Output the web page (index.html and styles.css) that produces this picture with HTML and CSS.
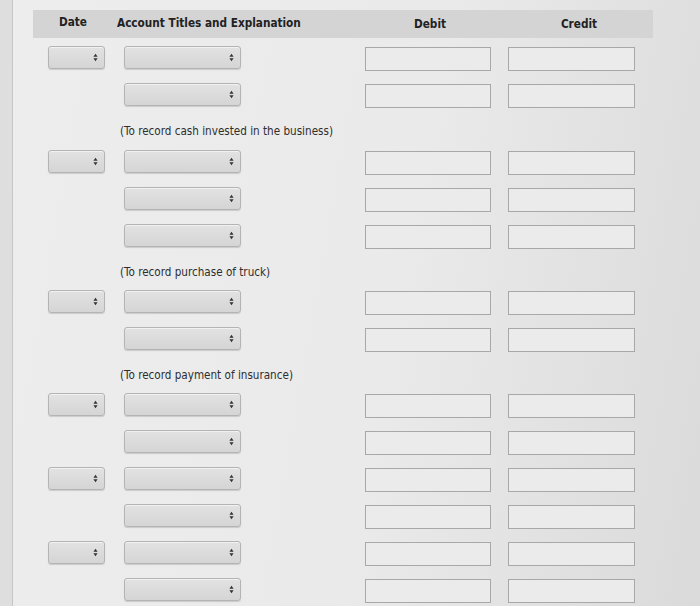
FILE: index.html
```html
<!DOCTYPE html>
<html>
<head>
<meta charset="utf-8">
<link rel="stylesheet" href="styles.css">
</head>
<body>
<div class="sheet">
  <div class="journal">
    <div class="head">
      <div class="h-date">Date</div>
      <div class="h-acct">Account Titles and Explanation</div>
      <div class="h-amt">Debit</div>
      <div class="h-amt">Credit</div>
    </div>

    <div class="row">
      <div class="c-date"><div class="sel sel-date"><svg class="arr" viewBox="0 0 6 10"><polygon points="3,0.5 5.5,4 0.5,4"/><polygon points="0.5,6 5.5,6 3,9.5"/></svg></div></div>
      <div class="c-acct"><div class="sel sel-acct"><svg class="arr" viewBox="0 0 6 10"><polygon points="3,0.5 5.5,4 0.5,4"/><polygon points="0.5,6 5.5,6 3,9.5"/></svg></div></div>
      <div class="c-deb"><input class="amt" type="text"></div>
      <div class="c-cred"><input class="amt" type="text"></div>
    </div>
    <div class="row">
      <div class="c-date"></div>
      <div class="c-acct"><div class="sel sel-acct"><svg class="arr" viewBox="0 0 6 10"><polygon points="3,0.5 5.5,4 0.5,4"/><polygon points="0.5,6 5.5,6 3,9.5"/></svg></div></div>
      <div class="c-deb"><input class="amt" type="text"></div>
      <div class="c-cred"><input class="amt" type="text"></div>
    </div>
    <div class="note note-first">(To record cash invested in the business)</div>

    <div class="row">
      <div class="c-date"><div class="sel sel-date"><svg class="arr" viewBox="0 0 6 10"><polygon points="3,0.5 5.5,4 0.5,4"/><polygon points="0.5,6 5.5,6 3,9.5"/></svg></div></div>
      <div class="c-acct"><div class="sel sel-acct"><svg class="arr" viewBox="0 0 6 10"><polygon points="3,0.5 5.5,4 0.5,4"/><polygon points="0.5,6 5.5,6 3,9.5"/></svg></div></div>
      <div class="c-deb"><input class="amt" type="text"></div>
      <div class="c-cred"><input class="amt" type="text"></div>
    </div>
    <div class="row">
      <div class="c-date"></div>
      <div class="c-acct"><div class="sel sel-acct"><svg class="arr" viewBox="0 0 6 10"><polygon points="3,0.5 5.5,4 0.5,4"/><polygon points="0.5,6 5.5,6 3,9.5"/></svg></div></div>
      <div class="c-deb"><input class="amt" type="text"></div>
      <div class="c-cred"><input class="amt" type="text"></div>
    </div>
    <div class="row">
      <div class="c-date"></div>
      <div class="c-acct"><div class="sel sel-acct"><svg class="arr" viewBox="0 0 6 10"><polygon points="3,0.5 5.5,4 0.5,4"/><polygon points="0.5,6 5.5,6 3,9.5"/></svg></div></div>
      <div class="c-deb"><input class="amt" type="text"></div>
      <div class="c-cred"><input class="amt" type="text"></div>
    </div>
    <div class="note">(To record purchase of truck)</div>

    <div class="row">
      <div class="c-date"><div class="sel sel-date"><svg class="arr" viewBox="0 0 6 10"><polygon points="3,0.5 5.5,4 0.5,4"/><polygon points="0.5,6 5.5,6 3,9.5"/></svg></div></div>
      <div class="c-acct"><div class="sel sel-acct"><svg class="arr" viewBox="0 0 6 10"><polygon points="3,0.5 5.5,4 0.5,4"/><polygon points="0.5,6 5.5,6 3,9.5"/></svg></div></div>
      <div class="c-deb"><input class="amt" type="text"></div>
      <div class="c-cred"><input class="amt" type="text"></div>
    </div>
    <div class="row">
      <div class="c-date"></div>
      <div class="c-acct"><div class="sel sel-acct"><svg class="arr" viewBox="0 0 6 10"><polygon points="3,0.5 5.5,4 0.5,4"/><polygon points="0.5,6 5.5,6 3,9.5"/></svg></div></div>
      <div class="c-deb"><input class="amt" type="text"></div>
      <div class="c-cred"><input class="amt" type="text"></div>
    </div>
    <div class="note">(To record payment of insurance)</div>

    <div class="row">
      <div class="c-date"><div class="sel sel-date"><svg class="arr" viewBox="0 0 6 10"><polygon points="3,0.5 5.5,4 0.5,4"/><polygon points="0.5,6 5.5,6 3,9.5"/></svg></div></div>
      <div class="c-acct"><div class="sel sel-acct"><svg class="arr" viewBox="0 0 6 10"><polygon points="3,0.5 5.5,4 0.5,4"/><polygon points="0.5,6 5.5,6 3,9.5"/></svg></div></div>
      <div class="c-deb"><input class="amt" type="text"></div>
      <div class="c-cred"><input class="amt" type="text"></div>
    </div>
    <div class="row">
      <div class="c-date"></div>
      <div class="c-acct"><div class="sel sel-acct"><svg class="arr" viewBox="0 0 6 10"><polygon points="3,0.5 5.5,4 0.5,4"/><polygon points="0.5,6 5.5,6 3,9.5"/></svg></div></div>
      <div class="c-deb"><input class="amt" type="text"></div>
      <div class="c-cred"><input class="amt" type="text"></div>
    </div>
    <div class="row">
      <div class="c-date"><div class="sel sel-date"><svg class="arr" viewBox="0 0 6 10"><polygon points="3,0.5 5.5,4 0.5,4"/><polygon points="0.5,6 5.5,6 3,9.5"/></svg></div></div>
      <div class="c-acct"><div class="sel sel-acct"><svg class="arr" viewBox="0 0 6 10"><polygon points="3,0.5 5.5,4 0.5,4"/><polygon points="0.5,6 5.5,6 3,9.5"/></svg></div></div>
      <div class="c-deb"><input class="amt" type="text"></div>
      <div class="c-cred"><input class="amt" type="text"></div>
    </div>
    <div class="row">
      <div class="c-date"></div>
      <div class="c-acct"><div class="sel sel-acct"><svg class="arr" viewBox="0 0 6 10"><polygon points="3,0.5 5.5,4 0.5,4"/><polygon points="0.5,6 5.5,6 3,9.5"/></svg></div></div>
      <div class="c-deb"><input class="amt" type="text"></div>
      <div class="c-cred"><input class="amt" type="text"></div>
    </div>
    <div class="row">
      <div class="c-date"><div class="sel sel-date"><svg class="arr" viewBox="0 0 6 10"><polygon points="3,0.5 5.5,4 0.5,4"/><polygon points="0.5,6 5.5,6 3,9.5"/></svg></div></div>
      <div class="c-acct"><div class="sel sel-acct"><svg class="arr" viewBox="0 0 6 10"><polygon points="3,0.5 5.5,4 0.5,4"/><polygon points="0.5,6 5.5,6 3,9.5"/></svg></div></div>
      <div class="c-deb"><input class="amt" type="text"></div>
      <div class="c-cred"><input class="amt" type="text"></div>
    </div>
    <div class="row">
      <div class="c-date"></div>
      <div class="c-acct"><div class="sel sel-acct"><svg class="arr" viewBox="0 0 6 10"><polygon points="3,0.5 5.5,4 0.5,4"/><polygon points="0.5,6 5.5,6 3,9.5"/></svg></div></div>
      <div class="c-deb"><input class="amt" type="text"></div>
      <div class="c-cred"><input class="amt" type="text"></div>
    </div>
  </div>
</div>
</body>
</html>
```

FILE: styles.css
```css
html, body {
  margin: 0;
  padding: 0;
  height: 100%;
  overflow: hidden;
}
body {
  background: #dedede;
  font-family: "DejaVu Sans Condensed", "DejaVu Sans", Verdana, sans-serif;
  color: #2a2a2a;
}
.sheet {
  margin-left: 12px;
  min-height: 606px;
  border-left: 1px solid #c6c6c6;
  background: linear-gradient(100deg, #ededed 0%, #eaeaea 55%, #dadada 100%);
  padding-top: 10px;
}
.journal {
  margin-left: 20px;
  width: 620px;
}
.head {
  display: grid;
  grid-template-columns: 80px 242px 150px 148px;
  height: 28px;
  align-items: center;
  background: #d4d4d4;
  font-weight: bold;
  font-size: 11.7px;
  color: #222;
}
.h-date {
  text-align: center;
  margin-top: -4px;
}
.h-acct {
  padding-left: 4px;
  margin-top: -2px;
}
.h-amt {
  text-align: center;
}
.row {
  display: grid;
  grid-template-columns: 80px 242px 150px 148px;
  height: 37px;
  align-items: start;
}
.head + .row {
  margin-top: 8px;
}
.sel {
  box-sizing: border-box;
  height: 23px;
  border: 1px solid #b4b4b4;
  border-radius: 3px;
  background: linear-gradient(#e2e2e2, #d5d5d5);
  box-shadow: 0 1px 1px rgba(0,0,0,0.14), inset 0 1px 0 rgba(255,255,255,0.5);
  display: flex;
  align-items: center;
  justify-content: flex-end;
  padding-right: 6px;
}
.sel-date {
  margin-left: 15px;
  width: 57px;
}
.sel-acct {
  margin-left: 11px;
  width: 117px;
}
.arr {
  width: 5px;
  height: 9px;
  fill: #333;
}
.amt {
  box-sizing: border-box;
  display: block;
  height: 24px;
  margin: 1px 0 0 0;
  border: 1px solid #a8a8a8;
  border-radius: 0;
  background: #ebebeb;
  padding: 0;
  outline: none;
}
.c-deb .amt {
  margin-left: 10px;
  width: 126px;
}
.c-cred .amt {
  margin-left: 3px;
  width: 127px;
}
.note {
  height: 29px;
  padding-left: 87px;
  padding-top: 4px;
  font-size: 11.6px;
  line-height: 14px;
  color: #2e2e2e;
  box-sizing: border-box;
}
.note-first {
  height: 30px;
}
```
